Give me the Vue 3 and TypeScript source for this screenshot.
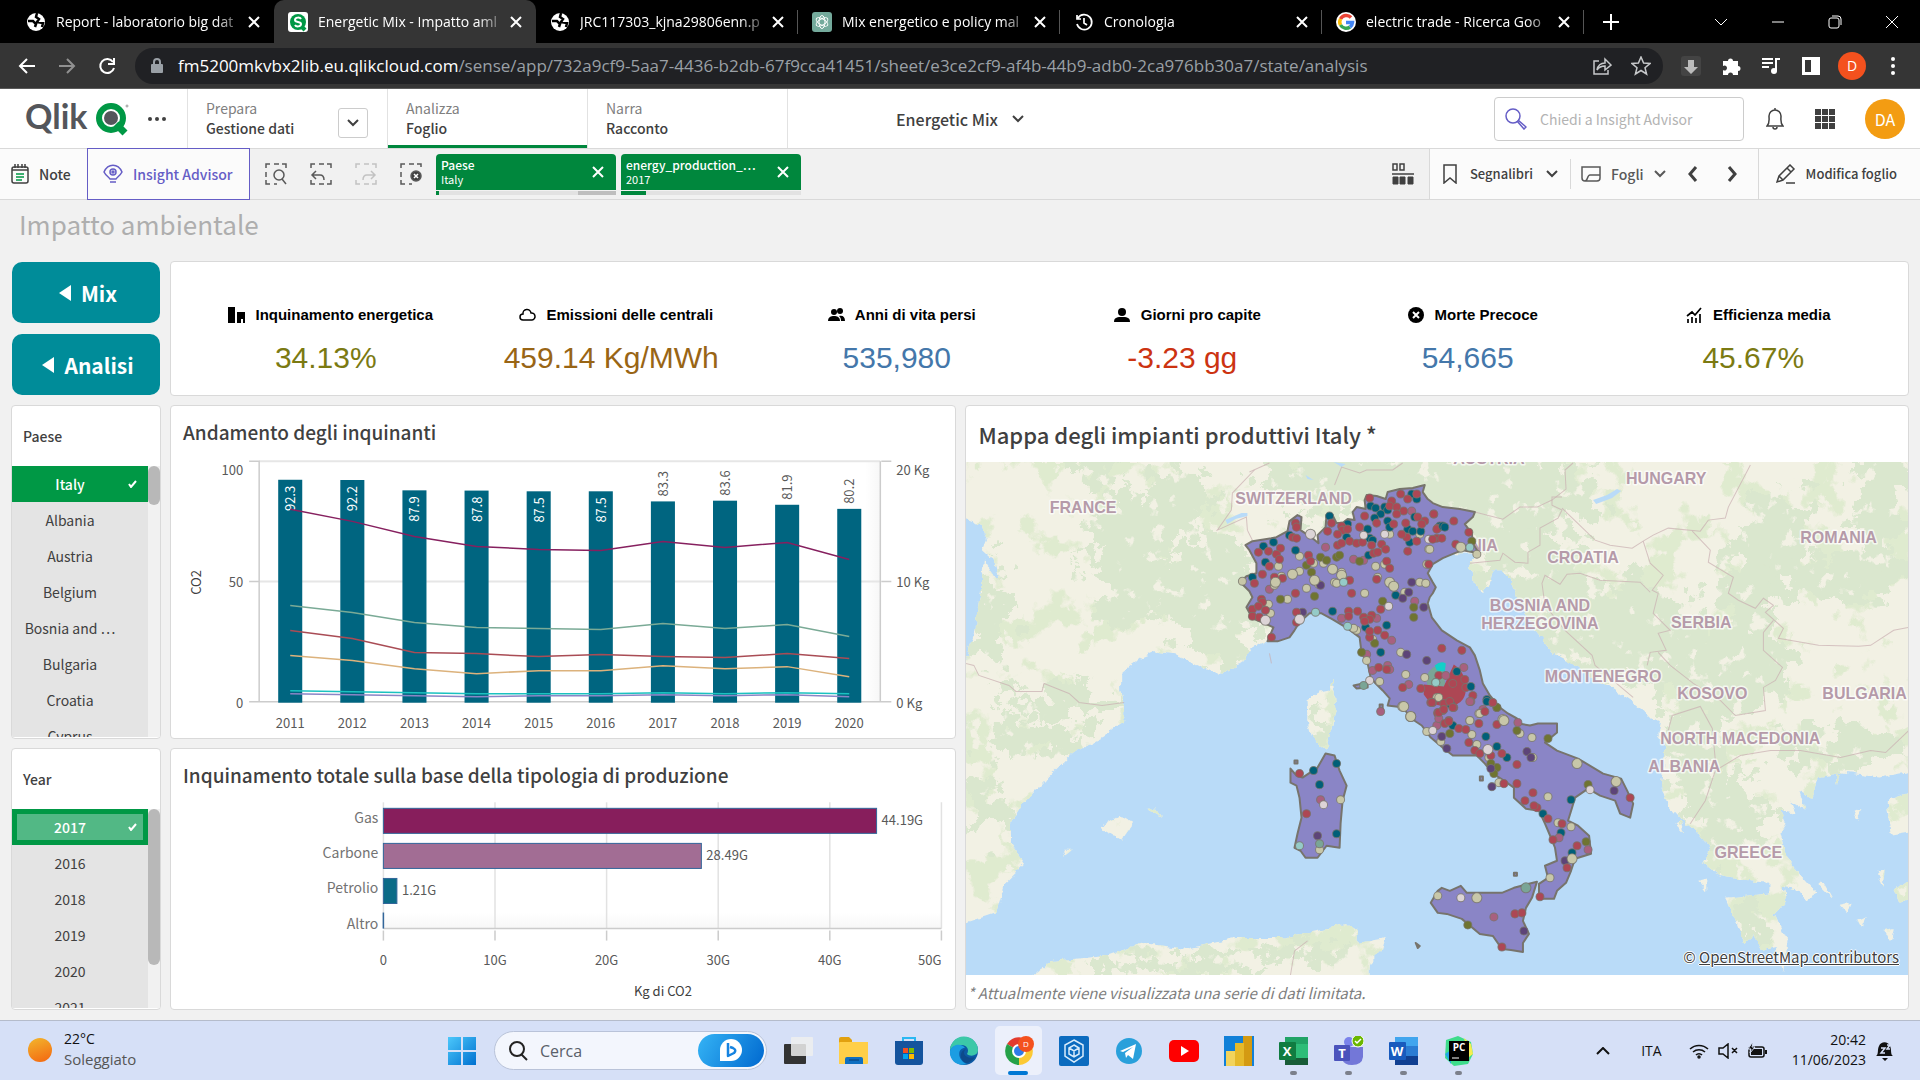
<script setup lang="ts">
import { ref } from 'vue'

interface Tab { title: string; icon: string }
interface Kpi { label: string; value: string; tone: string; icon: string }
interface Pins { tone: string; r: number; at: number[][] }

const tabs: Tab[] = [
  { title: 'Report - laboratorio big dat', icon: 'globe' },
  { title: 'Energetic Mix - Impatto aml', icon: 'sense' },
  { title: 'JRC117303_kjna29806enn.p', icon: 'globe' },
  { title: 'Mix energetico e policy mal', icon: 'gpt' },
  { title: 'Cronologia', icon: 'history' },
  { title: 'electric trade - Ricerca Goo', icon: 'google' },
]
const activeTab = ref(1)

const kpis: Kpi[] = [
  { label: 'Inquinamento energetica', value: '34.13%', tone: 'olive', icon: 'building' },
  { label: 'Emissioni delle centrali', value: '459.14 Kg/MWh', tone: 'brown', icon: 'cloud' },
  { label: 'Anni di vita persi', value: '535,980', tone: 'blue', icon: 'group' },
  { label: 'Giorni pro capite', value: '-3.23 gg', tone: 'red', icon: 'person' },
  { label: 'Morte Precoce', value: '54,665', tone: 'blue', icon: 'cross' },
  { label: 'Efficienza media', value: '45.67%', tone: 'olive', icon: 'trend' },
]

const countries = ['Italy', 'Albania', 'Austria', 'Belgium', 'Bosnia and …', 'Bulgaria', 'Croatia', 'Cyprus']
const years = ['2017', '2016', '2018', '2019', '2020', '2021']
const country = ref('Italy')
const year = ref('2017')

/* Combo chart: bars on the left axis (0-100), lines drawn over them */
const co2 = [92.3, 92.2, 87.9, 87.8, 87.5, 87.5, 83.3, 83.6, 81.9, 80.2]
const bars = co2.map((v, i) => ({ v, year: 2011 + i, x: 290 + 62 * i, y: 701 - 2.4 * v, inside: i < 6 }))
const lines = [
  { color: '#86205f', y: [509, 521, 536, 546, 549, 550, 541, 547, 542, 559] },
  { color: '#7aaa96', y: [605, 612, 622, 627, 628, 629, 623, 628, 624, 636] },
  { color: '#a94c55', y: [630, 638, 652, 653, 656, 654, 656, 657, 653, 658] },
  { color: '#dcb27c', y: [655, 660, 668, 673, 670, 670, 665, 668, 666, 676] },
  { color: '#8a85c6', y: [693, 694, 695, 696, 695, 695, 694, 695, 694, 696] },
  { color: '#1ac2c0', y: [690, 691, 692, 693, 693, 693, 692, 693, 692, 693] },
].map(l => ({ color: l.color, points: l.y.map((y, i) => `${290 + 62 * i},${y}`).join(' ') }))

const sources = [
  { name: 'Gas', v: 44.19, fill: '#871e5c' },
  { name: 'Carbone', v: 28.49, fill: '#a26d94' },
  { name: 'Petrolio', v: 1.21, fill: '#0b6b87' },
]
const gTicks = [0, 10, 20, 30, 40, 50]
const gx = (v: number) => 383 + v * 11.14

/* Map */
const coast = {
  continent: 'M960 456H1915V770L1878 777 1842 772 1817 777 1811 797 1799 790 1805 810 1790 800 1796 813 1780 810 1786 823 1780 833 1786 857 1799 873 1817 893 1805 900 1799 890 1783 887 1786 900 1774 913 1786 940 1783 970 1774 947 1762 950 1753 933 1744 943 1734 917 1725 897 1768 893 1768 882 1744 880 1719 875 1704 863 1710 847 1698 833 1685 823 1670 807 1661 790 1664 767 1664 743 1658 735 1661 720 1652 720 1643 710 1630 700 1610 687 1590 677 1573 663 1553 653 1537 633 1530 620 1517 597 1513 583 1502 570 1493 570 1490 583 1482 593 1473 580 1470 563 1479 553 1455 553 1400 540 1300 600 1268 641 1253 648 1243 662 1227 672 1213 672 1193 662 1177 655 1155 652 1142 657 1122 673 1122 690 1125 707 1125 720 1104 737 1073 753 1049 777 1024 803 1012 823 1012 843 1026 863 1006 883 997 912 960 924V660L967 660 975 633 982 590 985 560 995 575 1001 582 997 563 983 550 987 540 983 525 960 515Z',
  africa: 'M1027 980 1052 960 1107 955 1144 942 1187 948 1236 937 1284 937 1327 927 1346 923 1358 930 1358 942 1386 937 1382 950 1369 963 1369 980Z',
  corsica: 'M1333 680 1335 690 1337 710 1333 727 1326 749 1312 737 1308 720 1307 700 1320 692 1330 690Z',
  isles: 'M1101 827 1120 815 1134 823 1122 840ZM1147 808 1156 808 1163 817ZM1063 857 1073 849 1066 849ZM1698 880 1706 878 1706 890ZM1675 822 1680 820 1684 832ZM1853 812 1862 808 1856 818ZM1886 800 1915 790V830L1890 834ZM1876 872 1884 870 1882 886ZM1893 890 1915 872V896L1898 902ZM1840 905 1850 903 1846 912ZM1858 920 1866 916 1862 928ZM1885 930 1893 928 1890 940ZM1822 880 1832 898 1818 884ZM1836 773 1840 776 1836 783Z',
}
const woods = [
  [1400, 480, 140, 42], [1500, 500, 100, 50], [1215, 600, 50, 66], [985, 610, 24, 54], [1130, 560, 40, 70],
  [1090, 466, 26, 18], [1180, 500, 30, 38], [1060, 700, 64, 16], [1040, 740, 60, 18], [985, 800, 18, 30], [1610, 630, 96, 50],
  [1530, 575, 58, 34], [1730, 668, 62, 48], [1775, 540, 36, 56], [1850, 575, 76, 26], [1882, 500, 30, 60],
  [1690, 740, 26, 66], [1840, 745, 66, 20], [1730, 815, 36, 46], [1750, 590, 26, 50], [1180, 966, 90, 12], [1745, 920, 16, 22], [1300, 950, 40, 12], [1321, 718, 9, 26],
]
const borders = [
  '967,663 975,665 980,675 1010,685 1017,691 1043,691 1045,683 1070,693 1080,702 1103,705 1125,702',
  '1250,472 1270,463', '1255,470 1233,493 1232,510 1218,530 1247,517 1248,530 1253,540',
  '1335,485 1342,467 1360,473 1367,470 1393,470 1403,463',
  '1475,512 1503,519 1520,507 1537,507 1552,500 1566,489 1565,470 1573,463',
  '1470,563 1500,560 1503,553 1515,562 1528,563 1528,552 1540,545 1540,528 1558,518 1562,510 1552,505 1552,497 1562,497',
  '1562,508 1595,540 1610,545 1632,548 1643,541 1653,535 1668,528 1700,531 1708,520 1725,518 1728,507 1750,465',
  '1692,531 1710,550 1708,562 1733,577 1728,593 1738,600 1755,608 1763,598 1773,605 1765,612 1783,628 1778,638 1818,645 1858,646 1870,645 1893,630 1908,627',
  '1643,541 1650,563 1663,575 1652,590 1658,593 1653,613 1670,630 1658,633 1666,650 1650,652 1647,665',
  '1633,697 1595,665 1592,655 1565,630 1545,605 1542,583 1545,575 1560,584 1567,574 1580,573 1600,580 1640,582 1650,592',
  '1773,620 1763,632 1763,650 1782,667 1775,680 1763,687 1765,710 1735,715 1720,700 1693,683 1670,665 1658,652',
  '1690,823 1705,800 1715,770 1740,755 1770,750 1800,750 1840,757 1870,750 1885,752 1908,730',
  '1668,730 1672,715 1700,706 1712,728 1716,770', '1291,974 1295,950 1308,940', '1270,653 1272,663',
]
const places = [
  { t: 'FRANCE', x: 1084, y: 513 }, { t: 'SWITZERLAND', x: 1294, y: 504 }, { t: 'AUSTRIA', x: 1489, y: 464 },
  { t: 'HUNGARY', x: 1666, y: 484 }, { t: 'ROMANIA', x: 1838, y: 543 }, { t: 'SLOVENIA', x: 1457, y: 551 },
  { t: 'CROATIA', x: 1583, y: 563 }, { t: 'BOSNIA AND', x: 1540, y: 611 }, { t: 'HERZEGOVINA', x: 1540, y: 629 },
  { t: 'SERBIA', x: 1701, y: 628 }, { t: 'MONTENEGRO', x: 1603, y: 682 }, { t: 'KOSOVO', x: 1712, y: 699 },
  { t: 'BULGARIA', x: 1864, y: 699 }, { t: 'NORTH MACEDONIA', x: 1740, y: 743 }, { t: 'ALBANIA', x: 1684, y: 771 },
  { t: 'GREECE', x: 1748, y: 857 },
]
const italy = 'M1246 545 1253 541 1272 538 1277 537 1288 531 1290 521 1298 515 1302 517 1301 530 1313 538 1319 543 1318 535 1326 527 1327 515 1333 515 1337 523 1343 523 1348 519 1355 520 1353 512 1357 507 1366 509 1365 500 1367 495 1377 496 1386 499 1388 492 1400 489 1413 488 1425 485 1423 492 1428 499 1433 503 1443 507 1460 509 1475 512 1473 517 1465 524 1468 528 1472 533 1473 543 1479 553 1463 550 1455 553 1443 558 1433 564 1428 573 1433 582 1436 587 1433 593 1430 597 1428 603 1432 617 1442 630 1457 640 1470 647 1475 655 1480 670 1483 683 1490 695 1500 707 1508 713 1517 718 1519 723 1530 725 1538 723 1557 723 1557 732 1545 742 1557 750 1578 758 1603 773 1621 778 1627 790 1633 803 1630 817 1620 813 1615 800 1600 795 1588 788 1575 797 1572 807 1568 820 1578 825 1589 835 1591 853 1575 858 1571 870 1566 882 1557 890 1554 898 1539 898 1539 883 1548 877 1545 865 1557 860 1555 847 1551 837 1545 823 1539 810 1526 808 1514 797 1514 787 1504 780 1493 773 1485 763 1477 755 1453 755 1444 748 1431 737 1422 725 1410 717 1404 707 1388 705 1390 698 1383 690 1375 682 1371 677 1368 663 1362 653 1360 637 1348 628 1333 619 1322 613 1310 613 1300 622 1295 630 1290 637 1278 641 1268 641 1274 627 1265 623 1253 618 1247 607 1253 597 1250 591 1241 582 1247 576 1257 573 1257 563 1250 550Z'
  + 'M1326 753 1335 755 1340 770 1347 785 1343 800 1341 823 1340 847 1327 845 1318 857 1306 857 1301 850 1295 847 1298 833 1302 817 1300 797 1297 785 1291 782 1291 768 1297 775 1303 777 1318 767Z'
  + 'M1438 890 1442 887 1450 890 1461 885 1467 892 1502 892 1514 887 1529 883 1537 881 1532 897 1526 907 1523 920 1529 933 1523 942 1523 951 1511 949 1502 948 1493 935 1480 933 1462 918 1447 913 1438 912 1431 902Z'
  + 'M1354 685 1368 682 1368 687 1357 688ZM1380 704H1383V708H1380ZM1295 760H1298V763H1295ZM1480 776H1483V780H1480ZM1514 872H1517V875H1514ZM1416 942 1420 945 1418 947Z'

/* Plants, grouped by map sheet; every sheet carries its own origin and scale */
const red = '#ad4754', teal = '#005f78', cream = '#c8c7a9', olive = '#6f7431', violet = '#5d4478'
const rose = '#a8607f', pale = '#dcd4d6', aqua = '#95cbc8', sage = '#7aa596'
const sheets: { x: number; y: number; sx: number; sy: number; pins: Pins[] }[] = [
  { x: 960, y: 400, sx: 1 / 3, sy: 1 / 3, pins: [
    { tone: rose, r: 4, at: [[1097, 442], [1182, 476], [1213, 480], [930, 567], [1145, 654], [1250, 654], [1295, 720], [1355, 334], [1222, 762], [1240, 810], [1283, 795], [1290, 806], [1347, 852], [1264, 934], [1366, 604]] },
    { tone: cream, r: 4, at: [[1020, 468], [958, 498], [1020, 513], [1063, 490], [1040, 564], [1077, 552], [967, 528], [945, 556], [850, 544], [983, 596], [928, 611], [934, 640], [1092, 490], [1145, 515], [1125, 545], [1130, 548], [1249, 498], [1275, 492], [1290, 402], [1380, 403], [1407, 447], [1215, 580], [1335, 576], [1380, 547], [1398, 548], [1190, 690], [1182, 685], [1222, 781], [1324, 755], [1337, 823], [1260, 843], [1240, 718], [1395, 832], [1432, 890], [1255, 530], [1400, 492]] },
    { tone: olive, r: 4, at: [[1082, 472], [1100, 481], [1130, 470], [1140, 465], [1199, 484], [1042, 495], [1055, 517], [963, 597], [1065, 589], [1268, 603], [1362, 620], [1362, 651], [1207, 757], [1245, 728]] },
    { tone: teal, r: 4, at: [[1111, 349], [991, 405], [1009, 451], [941, 427], [912, 438], [917, 487], [880, 532], [1232, 317], [1247, 324], [1275, 320], [1284, 331], [1262, 343], [1245, 353], [1284, 364], [1290, 380], [1355, 281], [1370, 298], [1225, 388], [1165, 372], [1160, 410], [1230, 415], [1240, 420], [1227, 464], [1345, 386], [1360, 393], [1384, 394], [1350, 425], [1365, 352], [1309, 586], [1119, 634], [1218, 681], [1281, 675], [1263, 756], [1440, 378]] },
    { tone: violet, r: 4, at: [[1355, 545], [1330, 595], [1346, 577], [1391, 620], [1030, 636], [1083, 556], [1342, 763], [1402, 781]] },
    { tone: red, r: 4, at: [[1231, 295], [1215, 347], [1323, 283], [1372, 282], [1343, 298], [1297, 303], [1290, 318], [1312, 322], [1333, 332], [1310, 343], [1422, 343], [1375, 352], [1395, 363], [1385, 372], [1337, 370], [1303, 372], [1200, 380], [1250, 368], [1008, 370], [1010, 382], [998, 412], [1010, 415], [1117, 370], [1105, 392], [1145, 378], [1150, 390], [1165, 388], [1135, 402], [1135, 435], [1145, 428], [1170, 424], [1192, 428], [1210, 425], [1235, 435], [1265, 433], [1278, 447], [1344, 452], [1370, 424], [1340, 410], [1325, 403], [1433, 385], [1432, 415], [1242, 460], [1255, 456], [1282, 482], [1290, 503], [1047, 466], [1053, 482], [963, 445], [950, 462], [960, 478], [927, 452], [897, 456], [930, 497], [910, 523], [945, 530], [968, 533], [885, 550], [1007, 580], [1177, 580], [1170, 541], [1252, 537], [905, 597], [910, 606], [878, 628], [897, 618], [917, 630], [880, 647], [900, 652], [935, 712], [1010, 636], [1010, 666], [1168, 632], [1195, 634], [1168, 648], [1212, 650], [1235, 645], [1263, 628], [1230, 657], [1215, 662], [1255, 690], [1275, 705], [1230, 712], [1230, 693], [1408, 492], [1258, 800], [1280, 808], [1330, 860], [1383, 863], [1413, 905], [1435, 935]] },
    { tone: cream, r: 5, at: [[998, 522], [1120, 508], [1065, 541], [1290, 546], [1303, 557], [948, 546], [1147, 524], [1330, 917], [1353, 949]] },
    { tone: pale, r: 5, at: [[1052, 403], [1021, 656], [919, 660]] },
    { tone: pale, r: 4, at: [[1212, 405], [1275, 403], [1407, 416], [1286, 618], [1231, 841]] },
    { tone: aqua, r: 4, at: [[1152, 547], [1069, 637], [1165, 679], [1429, 846]] },
    { tone: sage, r: 4, at: [[1211, 856]] },
  ] },
  { x: 1430, y: 400, sx: 1 / 3, sy: 1 / 3, pins: [
    { tone: red, r: 4, at: [[12, 343], [72, 364], [22, 386], [36, 415], [10, 418], [118, 395], [78, 433], [37, 744], [97, 751], [27, 824], [105, 838], [107, 860], [128, 886], [187, 905], [72, 921], [40, 930], [8, 905], [25, 938], [68, 848], [162, 934], [58, 960]] },
    { tone: rose, r: 4, at: [[102, 800], [48, 824], [122, 903], [160, 926]] },
    { tone: teal, r: 4, at: [[40, 377], [45, 382], [82, 812], [122, 858], [170, 897], [64, 913]] },
    { tone: olive, r: 4, at: [[125, 423], [202, 920]] },
    { tone: cream, r: 4, at: [[142, 462], [0, 448], [27, 890], [148, 939], [120, 960]] },
    { tone: cream, r: 5, at: [[94, 440], [220, 957]] },
    { tone: aqua, r: 4, at: [[119, 441], [19, 847]] },
  ] },
  { x: 960, y: 700, sx: 1 / 1.6333, sy: 1 / 3, pins: [
    { tone: cream, r: 4, at: [[763, 92], [785, 122], [833, 60], [849, 38], [836, 103], [845, 132], [864, 172], [914, 100], [935, 111], [880, 245], [960, 289], [936, 172], [998, 379], [976, 366], [964, 530], [780, 585], [622, 298], [588, 448]] },
    { tone: olive, r: 4, at: [[801, 100], [877, 20], [909, 90], [961, 115], [877, 200], [872, 218], [868, 190], [1025, 252], [1022, 424], [830, 671]] },
    { tone: teal, r: 4, at: [[806, 75], [859, 109], [877, 139], [894, 170], [861, 2], [998, 296], [953, 338], [982, 395], [999, 456], [616, 188], [579, 209], [588, 252], [616, 399]] },
    { tone: violet, r: 4, at: [[787, 108], [795, 144], [868, 205], [926, 154], [932, 170], [869, 257], [1068, 270], [988, 480], [584, 404], [921, 690]] },
    { tone: rose, r: 4, at: [[911, 66], [779, 75], [783, 55], [833, 3], [979, 410], [872, 647], [590, 297], [1026, 448]] },
    { tone: red, r: 4, at: [[771, 6], [790, 8], [800, 4], [783, 35], [790, 28], [806, 22], [858, 32], [870, 5], [792, 70], [799, 62], [815, 84], [827, 87], [847, 68], [877, 72], [831, 126], [841, 150], [850, 160], [868, 166], [886, 158], [909, 192], [888, 250], [909, 249], [936, 275], [923, 299], [942, 320], [937, 316], [960, 355], [983, 370], [968, 418], [1007, 436], [992, 502], [948, 588], [906, 640], [918, 635], [885, 738], [1095, 290], [555, 220], [566, 340]] },
    { tone: cream, r: 5, at: [[725, 17], [737, 49], [888, 59], [1008, 188], [1072, 244], [1000, 475], [844, 590]] },
    { tone: pale, r: 4, at: [[772, 91], [594, 313], [819, 591], [1029, 267]] },
    { tone: pale, r: 5, at: [[862, 146]] },
    { tone: aqua, r: 4, at: [[555, 434]] },
    { tone: sage, r: 5, at: [[925, 560]] },
    { tone: sage, r: 4, at: [[588, 430]] },
  ] },
]
const pins = sheets.flatMap(s => s.pins.flatMap(p => p.at.map(([x, y]) => ({
  tone: p.tone, r: p.r, x: Math.round(s.x + x * s.sx), y: Math.round(s.y + y * s.sy),
}))))

const apps = ['taskview', 'folder', 'store', 'edge', 'chrome', 'box', 'telegram', 'youtube', 'powerbi', 'excel', 'teams', 'word', 'pycharm']
const running = ['excel', 'teams', 'word', 'pycharm']
</script>

<template>
  <div class="screen">
    <header class="tabbar">
      <div v-for="(t, i) in tabs" :key="i" class="tab" :class="{ active: i === activeTab, ruled: i > 1 }">
        <svg class="fav" viewBox="0 0 20 20" aria-hidden="true">
          <g v-if="t.icon === 'globe'"><circle cx="10" cy="10" r="9" fill="#fff" /><path d="M2 9h5l3 3-1 3M11 1l-1 4 3 2-2 3 6 1-1 4" fill="none" stroke="#000" stroke-width="2.500" /></g>
          <g v-else-if="t.icon === 'sense'"><rect width="20" height="20" rx="3" fill="#fff" /><circle cx="10" cy="10" r="8" fill="#009845" /><path d="M13 14l4 4" stroke="#009845" stroke-width="4" /><path d="M13 7c-1-2-6-2-6 1s6 1 6 4-5 3-6 1" fill="none" stroke="#fff" stroke-width="2" /></g>
          <g v-else-if="t.icon === 'gpt'"><rect width="20" height="20" rx="3" fill="#74aa9c" /><g fill="none" stroke="#fff"><ellipse cx="10" cy="10" rx="3" ry="6.500" /><ellipse cx="10" cy="10" rx="3" ry="6.500" transform="rotate(60 10 10)" /><ellipse cx="10" cy="10" rx="3" ry="6.500" transform="rotate(120 10 10)" /></g></g>
          <g v-else-if="t.icon === 'history'" fill="none" stroke="#fff" stroke-width="1.700"><path d="M4 6a7.500 7.500 0 1 1-1 6M3 3v4h4M10 6v5l3 2" /></g>
          <g v-else fill="none" stroke-width="3.500"><circle cx="10" cy="10" r="10" fill="#fff" stroke="none" /><path d="M15 5.500A6.500 6.500 0 0 0 4.500 7" stroke="#ea4335" /><path d="M4.500 7a6.500 6.500 0 0 0 0 6" stroke="#fbbc05" /><path d="M4.500 13A6.500 6.500 0 0 0 14 15" stroke="#34a853" /><path d="M14 15a6 6 0 0 0 2.500-4.500H10" stroke="#4285f4" /></g>
        </svg>
        <button class="tab-title" type="button" @click="activeTab = i">{{ t.title }}</button>
        <button class="tab-close" type="button" aria-label="Chiudi scheda"><svg width="12" height="12" viewBox="0 0 12 12"><path d="M1 1l10 10M11 1L1 11" stroke="#fff" stroke-width="2" /></svg></button>
      </div>
      <button class="newtab" type="button" aria-label="Nuova scheda"><svg width="16" height="16" viewBox="0 0 16 16"><path d="M8 0v16M0 8h16" stroke="#fff" stroke-width="2" /></svg></button>
      <div class="winctl">
        <button type="button" aria-label="Cerca schede"><svg width="14" height="14" viewBox="0 0 14 14"><path d="M1 4l6 6 6-6" /></svg></button>
        <button type="button" aria-label="Riduci"><svg width="14" height="14" viewBox="0 0 14 14"><path d="M1 7h12" /></svg></button>
        <button type="button" aria-label="Ripristina"><svg width="14" height="14" viewBox="0 0 14 14"><rect x="1" y="3" width="10" height="10" rx="2" /><path d="M4 1h6q3 0 3 3v6" /></svg></button>
        <button type="button" aria-label="Chiudi"><svg width="14" height="14" viewBox="0 0 14 14"><path d="M1 1l12 12M13 1L1 13" /></svg></button>
      </div>
    </header>

    <div class="addressbar">
      <button class="nav" type="button" aria-label="Indietro"><svg width="18" height="18" viewBox="0 0 18 18"><path d="M17 9H2M9 2L2 9l7 7" /></svg></button>
      <button class="nav dim" type="button" aria-label="Avanti"><svg width="18" height="18" viewBox="0 0 18 18"><path d="M1 9h15M9 2l7 7-7 7" /></svg></button>
      <button class="nav" type="button" aria-label="Ricarica"><svg width="18" height="18" viewBox="0 0 18 18"><path d="M15 5A7 7 0 1 0 16 11M16 1v6h-6" /></svg></button>
      <div class="omnibox">
        <svg width="12" height="16" viewBox="0 0 12 16"><rect y="6" width="12" height="9" rx="1" fill="#9aa0a6" /><path d="M3 7V4a3 3 0 0 1 6 0v3" fill="none" stroke="#9aa0a6" stroke-width="2" /></svg>
        <p class="url"><b>fm5200mkvbx2lib.eu.qlikcloud.com</b>/sense/app/732a9cf9-5aa7-4436-b2db-67f9cca41451/sheet/e3ce2cf9-af4b-44b9-adb0-2ca976bb30a7/state/analysis</p>
        <svg class="ic" width="20" height="20" viewBox="0 0 20 20"><path d="M7 5H2v13h14v-4M5 14c1-5 4-7 8-7V3l6 6-6 5v-4c-4 0-6 1-8 4z" /></svg>
        <svg class="ic" width="20" height="20" viewBox="0 0 20 20"><path d="M10 1l2.600 6 6.400.5-5 4.200 1.600 6.300-5.600-3.500L4.400 18 6 11.700 1 7.500 7.400 7z" /></svg>
      </div>
      <div class="ext">
        <svg width="20" height="20" viewBox="0 0 20 20"><rect width="20" height="20" rx="3" fill="#444" /><path d="M7 4h6v7h4l-7 7-7-7h4z" fill="#bbb" /></svg>
        <svg width="20" height="20" viewBox="0 0 20 20"><path d="M2 5h5a2.500 2.500 0 1 1 5 0h5v5a2.500 2.500 0 1 1 0 5v4h-5a2.500 2.500 0 1 0-5 0H2v-5a2.500 2.500 0 1 0 0-4z" fill="#fff" /></svg>
        <svg width="20" height="20" viewBox="0 0 20 20"><path d="M1 3h11M1 7h11M1 11h7M15 15V3h4" fill="none" stroke="#fff" stroke-width="2" /><circle cx="13" cy="15" r="3" fill="#fff" /></svg>
        <svg width="20" height="20" viewBox="0 0 20 20"><path d="M1 1h18v18H1zM4 4v12h6V4z" fill="#fff" fill-rule="evenodd" /></svg>
        <span class="me">D</span>
        <svg width="20" height="20" viewBox="0 0 20 20" fill="#fff"><circle cx="10" cy="3" r="2" /><circle cx="10" cy="10" r="2" /><circle cx="10" cy="17" r="2" /></svg>
      </div>
    </div>

    <div class="hub">
      <div class="brand">
        <svg class="logo" width="104" height="36" viewBox="0 0 104 36" role="img" aria-label="Qlik">
          <text x="0" y="28" class="logo-word">Qlik</text>
          <circle cx="86" cy="17" r="12" fill="#fff" stroke="#009845" stroke-width="6" />
          <path d="M91 23l9 9" stroke="#009845" stroke-width="7" /><circle cx="86" cy="17" r="7" fill="#54565b" /><circle cx="102" cy="5" r="1" fill="none" stroke="#999" />
        </svg>
        <button class="plain" type="button" aria-label="Altro"><svg width="20" height="6" viewBox="0 0 20 6" fill="#404040"><circle cx="3" cy="3" r="2" /><circle cx="10" cy="3" r="2" /><circle cx="17" cy="3" r="2" /></svg></button>
      </div>
      <nav class="modes">
        <a href="#prepara" class="mode"><span><small>Prepara</small>Gestione dati</span><i class="drop"><svg width="12" height="8" viewBox="0 0 12 8"><path d="M1 1l5 5 5-5" fill="none" stroke="#404040" stroke-width="2" /></svg></i></a>
        <a href="#analizza" class="mode on"><span><small>Analizza</small>Foglio</span></a>
        <a href="#narra" class="mode"><span><small>Narra</small>Racconto</span></a>
      </nav>
      <button class="appname" type="button">Energetic Mix <svg width="12" height="8" viewBox="0 0 12 8"><path d="M1 1l5 5 5-5" fill="none" stroke="#404040" stroke-width="2" /></svg></button>
      <div class="tools">
        <label class="ask">
          <svg width="22" height="22" viewBox="0 0 22 22" fill="none" stroke="#655dc6" stroke-width="1.500"><circle cx="8" cy="8" r="7" /><path d="M12 13l7 8 2-2-8-7" /></svg>
          <input type="text" placeholder="Chiedi a Insight Advisor" aria-label="Chiedi a Insight Advisor" />
        </label>
        <svg class="bell" width="18" height="22" viewBox="0 0 18 22" fill="none" stroke="#404040" stroke-width="1.500"><path d="M1 18c3-3 2-6 2-10a6 6 0 0 1 12 0c0 4-1 7 2 10zM7 19a2 2 0 0 0 4 0M9 0v2" /></svg>
        <svg class="launcher" width="20" height="20" viewBox="0 0 20 20" fill="#404040"><template v-for="r in 3" :key="r"><rect v-for="c in 3" :key="c" :x="c * 7 - 7" :y="r * 7 - 7" width="6" height="6" /></template></svg>
        <span class="avatar">DA</span>
      </div>
    </div>

    <div class="toolbar">
      <button class="tb note" type="button"><svg width="18" height="20" viewBox="0 0 18 20" fill="none" stroke="#404040" stroke-width="1.500"><rect x="1" y="3" width="16" height="16" rx="2" /><path d="M1 6h16M4 0v4M7 0v4M11 0v4M14 0v4" /><path d="M5 10h8M5 13h8M5 16h6" stroke="#009845" /></svg>Note</button>
      <button class="tb advisor" type="button"><svg width="20" height="20" viewBox="0 0 20 20" fill="none" stroke="#655dc6" stroke-width="1.500"><path d="M1 8c4-9 14-9 18 0-2 4-5 5-6 7H7C6 13 3 12 1 8zM7 18h6" /><circle cx="10" cy="8" r="3" /><circle cx="10" cy="8" r="1" /></svg>Insight Advisor</button>
      <div class="selicons">
        <button class="plain" type="button" aria-label="Selezione intelligente"><svg width="22" height="22" viewBox="0 0 22 22"><path d="M5 1H1v4M9 1h5M17 1h4v4M1 9v5M1 17v4h4M9 21h3" /><circle cx="14" cy="12" r="5" /><path d="M17 16l4 5" /></svg></button>
        <button class="plain" type="button" aria-label="Passo indietro"><svg width="22" height="22" viewBox="0 0 22 22"><path d="M5 1H1v4M9 1h5M17 1h4v4M1 17v4h4M9 21h5M17 21h4v-4" /><path d="M6 8L2 12l4 4M2 12h8q4 0 4 5" /></svg></button>
        <button class="plain off" type="button" aria-label="Passo avanti" disabled><svg width="22" height="22" viewBox="0 0 22 22"><path d="M5 1H1v4M9 1h5M17 1h4v4M1 17v4h4M9 21h5M17 21h4v-4" /><path d="M16 8l4 4-4 4M20 12h-8q-4 0-4 5" /></svg></button>
        <button class="plain" type="button" aria-label="Cancella selezioni"><svg width="22" height="22" viewBox="0 0 22 22"><path d="M5 1H1v4M9 1h5M17 1h4v3M1 9v5M1 17v4h4M9 21h3" /><circle cx="16" cy="13" r="5" fill="#404040" /><path d="M14 11l4 4M18 11l-4 4" stroke="#fff" /></svg></button>
      </div>
      <div class="chips">
        <div class="chip"><div class="chip-body"><span><b>Paese</b>Italy</span><button type="button" aria-label="Cancella Paese"><svg width="12" height="12" viewBox="0 0 12 12"><path d="M1 1l10 10M11 1L1 11" stroke="#fff" stroke-width="2" /></svg></button></div><div class="strip paese" /></div>
        <div class="chip"><div class="chip-body"><span><b>energy_production_…</b>2017</span><button type="button" aria-label="Cancella anno"><svg width="12" height="12" viewBox="0 0 12 12"><path d="M1 1l10 10M11 1L1 11" stroke="#fff" stroke-width="2" /></svg></button></div><div class="strip anno" /></div>
      </div>
      <button class="plain seltool" type="button" aria-label="Strumento selezioni"><svg width="22" height="22" viewBox="0 0 22 22" fill="none" stroke="#404040"><path d="M1 1h4v6H1zM8 1h4v6H8zM0 11h22" stroke-width="1.500" /><path d="M1 14h5v7H1zM8 14h5v7H8zM16 14h5v7h-5z" fill="#404040" /></svg></button>
      <div class="sheettools">
        <button class="tb" type="button"><svg width="14" height="20" viewBox="0 0 14 20" fill="none" stroke="#404040" stroke-width="1.500"><path d="M1 1h12v18l-6-5-6 5z" /></svg>Segnalibri<svg width="12" height="8" viewBox="0 0 12 8"><path d="M1 1l5 5 5-5" fill="none" stroke="#404040" stroke-width="2" /></svg></button>
        <i class="sep" />
        <button class="tb fogli" type="button"><svg width="20" height="16" viewBox="0 0 20 16" fill="none" stroke="#595959" stroke-width="1.500"><path d="M4 15a3 3 0 0 1-3-3V1h18v8M4 15c3 0 2-6 5-6h10v3a3 3 0 0 1-3 3z" /></svg>Fogli<svg width="12" height="8" viewBox="0 0 12 8"><path d="M1 1l5 5 5-5" fill="none" stroke="#595959" stroke-width="2" /></svg></button>
        <button class="plain step" type="button" aria-label="Foglio precedente"><svg width="10" height="16" viewBox="0 0 10 16"><path d="M8 1L2 8l6 7" fill="none" stroke="#404040" stroke-width="3" /></svg></button>
        <button class="plain step" type="button" aria-label="Foglio successivo"><svg width="10" height="16" viewBox="0 0 10 16"><path d="M2 1l6 7-6 7" fill="none" stroke="#404040" stroke-width="3" /></svg></button>
      </div>
      <button class="tb edit" type="button"><svg width="20" height="20" viewBox="0 0 20 20" fill="none" stroke="#404040" stroke-width="1.500"><path d="M1 18l2-6L14 1l4 4L7 16zM11 4l4 4M3 12l4 4M10 19h9" /></svg>Modifica foglio</button>
    </div>

    <main class="sheet">
      <h1>Impatto ambientale</h1>
      <div class="grid">
        <div class="navbtns">
          <button type="button"><svg width="12" height="16" viewBox="0 0 12 16"><path d="M12 0v16L0 8z" fill="#fff" /></svg>Mix</button>
          <button type="button"><svg width="12" height="16" viewBox="0 0 12 16"><path d="M12 0v16L0 8z" fill="#fff" /></svg>Analisi</button>
        </div>

        <section class="card kpis">
          <div v-for="k in kpis" :key="k.label" class="kpi">
            <h3>
              <svg width="17" height="16" viewBox="0 0 17 16" aria-hidden="true">
                <path v-if="k.icon === 'building'" d="M0 0h7v16H0zM9 5h8v11h-2v-4h-2v4H9z" />
                <path v-else-if="k.icon === 'cloud'" d="M4 13a3 3 0 0 1 0-6 4 4 0 0 1 8-1 3.500 3.500 0 0 1 1 7z" fill="none" stroke="#000" stroke-width="1.500" />
                <g v-else-if="k.icon === 'group'"><circle cx="6" cy="5" r="3" /><path d="M0 14c0-4 3-5 6-5s6 1 6 5z" /><circle cx="12" cy="4" r="3" /><path d="M13 14c0-3-1-4-2-5 4-1 6 1 6 5z" /></g>
                <g v-else-if="k.icon === 'person'"><circle cx="8" cy="5" r="4" /><path d="M0 15c0-5 4-5 8-5s8 0 8 5z" /></g>
                <g v-else-if="k.icon === 'cross'"><circle cx="8" cy="8" r="8" /><path d="M5 5l6 6M11 5l-6 6" stroke="#fff" stroke-width="2" /></g>
                <path v-else d="M2 16v-4M6 16V10M10 16v-5M14 16V7M1 9l5-4 3 3 6-7" fill="none" stroke="#000" stroke-width="1.700" />
              </svg>{{ k.label }}
            </h3>
            <p :class="k.tone">{{ k.value }}</p>
          </div>
        </section>

        <section class="card filter">
          <h2>Paese</h2>
          <div class="listwrap">
            <ul>
              <li v-for="c in countries" :key="c"><button type="button" :class="{ picked: c === country }" @click="country = c">{{ c }}<svg v-if="c === country" width="9" height="8" viewBox="0 0 9 8"><path d="M1 4l2 3 5-6" fill="none" stroke="#fff" stroke-width="2" /></svg></button></li>
            </ul>
            <div class="track"><i class="thumb short" /></div>
          </div>
        </section>

        <section class="card combo">
          <h2>Andamento degli inquinanti</h2>
          <svg class="plot" viewBox="171 454 783 283" role="img" aria-label="Andamento degli inquinanti">
            <defs><linearGradient id="fadeR"><stop offset="0" stop-color="#fff" /><stop offset="1" stop-color="#f7f7f7" /></linearGradient></defs>
            <rect x="864" y="461" width="15" height="240" fill="url(#fadeR)" />
            <path d="M259 461H879M259 581H879" stroke="#e6e6e6" stroke-width="2" />
            <path d="M249 461H259V701H249M249 581H259M890 461H880M890 581H880M890 701H259M879 461V701" fill="none" stroke="#ccc" stroke-width="1.500" />
            <g v-for="b in bars" :key="b.year">
              <rect :x="b.x - 12" :y="b.y" width="24" :height="702 - b.y" fill="#006580" />
            </g>
            <g v-for="b in bars" :key="b.year" class="axis mid">
              <text :x="b.x" y="727">{{ b.year }}</text>
              <text :class="b.inside ? 'end light' : 'start'" :transform="`translate(${b.x + 5} ${b.inside ? b.y + 6 : b.y - 5}) rotate(-90)`">{{ b.v.toFixed(1) }}</text>
            </g>
            <polyline v-for="l in lines" :key="l.color" :points="l.points" fill="none" :stroke="l.color" stroke-width="1.500" />
            <g class="axis end"><text x="243" y="475">100</text><text x="243" y="587">50</text><text x="243" y="707">0</text></g>
            <g class="axis"><text x="895" y="475">20 Kg</text><text x="895" y="587">10 Kg</text><text x="895" y="707">0 Kg</text></g>
            <text class="axis mid dark" transform="translate(201 582) rotate(-90)">CO2</text>
          </svg>
        </section>

        <section class="card map">
          <h2>Mappa degli impianti produttivi Italy *</h2>
          <div class="canvas">
            <svg viewBox="966 462 942 512" preserveAspectRatio="xMidYMid slice" role="img" aria-label="Mappa degli impianti">
              <defs>
                <filter id="rough" x="-5%" y="-5%" width="110%" height="110%"><feTurbulence type="fractalNoise" baseFrequency="0.12" numOctaves="3" seed="4" /><feDisplacementMap in="SourceGraphic" scale="7" xChannelSelector="R" yChannelSelector="G" /></filter>
                <filter id="ragged" x="-5%" y="-5%" width="110%" height="110%"><feTurbulence type="fractalNoise" baseFrequency="0.045" numOctaves="4" seed="8" /><feDisplacementMap in="SourceGraphic" scale="80" xChannelSelector="R" yChannelSelector="G" /></filter>
                <filter id="meadow" x="0" y="0" width="100%" height="100%" color-interpolation-filters="sRGB"><feTurbulence type="fractalNoise" baseFrequency="0.025" numOctaves="4" seed="21" /><feColorMatrix values="0 0 0 0 .875  0 0 0 0 .92  0 0 0 0 .81  16 0 0 0 -8.8" /></filter>
                <filter id="fields" x="0" y="0" width="100%" height="100%" color-interpolation-filters="sRGB"><feTurbulence type="fractalNoise" baseFrequency="0.06" numOctaves="3" seed="3" /><feColorMatrix values="0 0 0 0 .948  0 0 0 0 .946  0 0 0 0 .895  14 0 0 0 -9" /></filter>
                <clipPath id="land"><path v-for="(d, n) in coast" :key="n" :d="d" /></clipPath>
              </defs>
              <rect x="966" y="462" width="942" height="512" fill="#b9dbf8" />
              <g filter="url(#rough)">
                <path v-for="(d, n) in coast" :key="n" :d="d" fill="#f2f1e4" />
                <g clip-path="url(#land)">
                  <rect x="966" y="462" width="942" height="512" filter="url(#meadow)" />
                  <g filter="url(#ragged)"><ellipse v-for="(w, i) in woods" :key="i" :cx="w[0]" :cy="w[1]" :rx="w[2]" :ry="w[3]" fill="#dae7ce" /></g>
                  <rect x="966" y="462" width="942" height="512" filter="url(#fields)" />
                </g>
              </g>
              <path d="M1226 520l16-7h6v3l-12 3-8 5zM1593 500l14-5 10-6 4 2-9 7-16 6zM1334 462l8 5 4-3zM1306 475l8 5-6-1z" fill="#b9dbf8" />
              <polyline v-for="(b, i) in borders" :key="i" :points="b" fill="none" stroke="#c9aeb0" stroke-opacity=".7" />
              <text v-for="p in places" :key="p.t" class="place" :x="p.x" :y="p.y">{{ p.t }}</text>
              <path :d="italy" fill="#8a85c6" stroke="#77746c" stroke-width="2" stroke-linejoin="round" />
              <path d="M1430 690a20 20 0 0 1-2-17q4-8 14-8l4 20z" fill="#7aa596" />
              <path d="M1435 665q6-5 11-2l-1 8-8-1z" fill="#12cfc8" />
              <path d="M1424 684l20 2 10-22q12 8 12 24 0 17-20 18-16-1-22-12z" fill="#ad4754" />
              <circle v-for="(p, i) in pins" :key="i" :cx="p.x" :cy="p.y" :r="p.r" :fill="p.tone" stroke="#77746c" stroke-opacity=".8" />
            </svg>
            <p class="credit">© <a href="#osm">OpenStreetMap contributors</a></p>
          </div>
          <p class="foot">* Attualmente viene visualizzata una serie di dati limitata.</p>
        </section>

        <section class="card filter">
          <h2>Year</h2>
          <div class="listwrap">
            <ul>
              <li v-for="y in years" :key="y"><button type="button" :class="{ picked: y === year, framed: y === year }" @click="year = y">{{ y }}<svg v-if="y === year" width="9" height="8" viewBox="0 0 9 8"><path d="M1 4l2 3 5-6" fill="none" stroke="#fff" stroke-width="2" /></svg></button></li>
            </ul>
            <div class="track"><i class="thumb long" /></div>
          </div>
        </section>

        <section class="card combo">
          <h2>Inquinamento totale sulla base della tipologia di produzione</h2>
          <svg class="plot" viewBox="171 797 783 211" role="img" aria-label="Inquinamento totale">
            <defs><linearGradient id="fadeB" x2="0" y2="1"><stop offset="0" stop-color="#fff" /><stop offset="1" stop-color="#f7f7f7" /></linearGradient></defs>
            <rect x="383" y="912" width="557" height="16" fill="url(#fadeB)" />
            <g v-for="g in gTicks" :key="g">
              <path :d="`M${gx(g)} 802V928`" stroke="#e2e2e2" stroke-width="1.500" /><path :d="`M${gx(g)} 930V940`" stroke="#ccc" stroke-width="1.500" />
              <text :class="['axis', g === 50 ? 'end' : 'mid']" :x="gx(g)" y="964">{{ g ? g + 'G' : '0' }}</text>
            </g>
            <path d="M383 928H940" stroke="#ccc" stroke-width="1.500" />
            <g v-for="(s, i) in sources" :key="s.name">
              <rect x="383" :y="808 + 35 * i" :width="s.v * 11.14" height="25" :fill="s.fill" stroke="#32669a" />
              <text class="axis" :x="gx(s.v) + 5" :y="825 + 35 * i">{{ s.v }}G</text>
              <text class="axis end cat" x="378" :y="823 + 35 * i">{{ s.name }}</text>
            </g>
            <path d="M383 912V928" stroke="#32669a" stroke-width="1.500" />
            <text class="axis end cat" x="378" y="928">Altro</text>
            <text class="axis mid dark" x="662" y="995">Kg di CO2</text>
          </svg>
        </section>
      </div>
    </main>

    <footer class="taskbar">
      <div class="weather"><i class="sun" /><p>22°C<br /><span>Soleggiato</span></p></div>
      <div class="dock">
        <button class="slot" type="button" aria-label="Start"><svg width="30" height="30" viewBox="0 0 30 30"><defs><linearGradient id="win" x2="1" y2="1"><stop offset="0" stop-color="#4cc8fb" /><stop offset="1" stop-color="#0071d0" /></linearGradient></defs><path d="M1 1h13v13H1zM16 1h13v13H16zM1 16h13v13H1zM16 16h13v13H16z" fill="url(#win)" /></svg></button>
        <label class="find">
          <svg width="20" height="20" viewBox="0 0 20 20" fill="none" stroke="#222" stroke-width="2"><circle cx="9" cy="8" r="7" /><path d="M13 13l6 6" /></svg>
          <input type="text" placeholder="Cerca" aria-label="Cerca" />
          <i class="bing"><svg width="26" height="26" viewBox="0 0 26 26"><path d="M13 1a11 11 0 0 1 0 22H2V12A11 11 0 0 1 13 1z" fill="#fff" /><path d="M10 5v13l6-3q3-3-1-5l-3-1" fill="none" stroke="#1683e0" stroke-width="2.500" stroke-linejoin="round" /></svg></i>
        </label>
        <button v-for="a in apps" :key="a" class="slot" :class="{ front: a === 'chrome' }" type="button" :aria-label="a">
          <svg width="30" height="30" viewBox="0 0 30 30">
            <g v-if="a === 'taskview'"><rect x="0" y="8" width="22" height="20" rx="1" fill="#333" /><rect x="7" y="1" width="22" height="19" rx="1" fill="#eee" fill-opacity=".85" /></g>
            <g v-else-if="a === 'folder'"><path d="M0 3q0-2 2-2h8l3 3v6H0z" fill="#e2a10f" /><path d="M0 7q0-1 1-1h28v21q0 1-1 1H0z" fill="#ffcf48" /><path d="M6 28v-5q0-2 2-2h14q2 0 2 2v5z" fill="#0f6fc0" /><path d="M10 24h10" stroke="#083c70" /></g>
            <g v-else-if="a === 'store'"><path d="M9 6V2h12v4" fill="none" stroke="#2bb8f2" stroke-width="2" /><path d="M1 5h28v21q0 3-3 3H4q-3 0-3-3z" fill="#15549d" /><path d="M9 12h5v5H9z" fill="#f25022" /><path d="M15 12h5v5h-5z" fill="#7fba00" /><path d="M9 18h5v5H9z" fill="#00a4ef" /><path d="M15 18h5v5h-5z" fill="#ffb900" /></g>
            <g v-else-if="a === 'edge'"><circle cx="15" cy="15" r="14" fill="#0c59a4" /><path d="M1 15A14 14 0 0 1 29 14c0 6-8 7-11 4 3-5-1-9-5-9-6 0-11 2-12 6z" fill="#3cc8a8" /><path d="M1 15c1-6 11-9 15-3-8 0-8 12 2 16C8 31 0 24 1 15z" fill="#1b9de2" /><path d="M17 13c-5 4 0 11 9 8-3 4-6 6-9 6-7-3-7-12 0-14z" fill="#0d4a8b" /></g>
            <g v-else-if="a === 'chrome'"><path d="M15 15L3 8a14 14 0 0 1 24 0z" fill="#e33b2e" /><path d="M15 15V29A14 14 0 0 1 3 8z" fill="#25a148" /><path d="M15 15L27 8a14 14 0 0 1-12 21z" fill="#fcc934" /><circle cx="15" cy="15" r="7" fill="#fff" /><circle cx="15" cy="15" r="5" fill="#2f7be8" /><circle cx="22" cy="8" r="8" fill="#f4511e" /><text x="22" y="11" class="tiny">D</text></g>
            <g v-else-if="a === 'box'"><rect width="30" height="30" rx="2" fill="#0b6bbf" /><path d="M15 4l9 5v11l-9 6-9-6V9zM15 9l5 3v6l-5 3-5-3v-6zM10 12l5 3 5-3M15 15v6" fill="none" stroke="#d9ecfb" stroke-width="1.500" /></g>
            <g v-else-if="a === 'telegram'"><circle cx="15" cy="15" r="13" fill="#29a0db" /><path d="M6 15l16-7-3 15-5-4-2 3-1-5 8-6-10 5z" fill="#fff" /></g>
            <g v-else-if="a === 'youtube'"><rect y="4" width="30" height="22" rx="5" fill="#f00" /><path d="M12 10l8 5-8 5z" fill="#fff" /></g>
            <g v-else-if="a === 'powerbi'"><rect width="30" height="30" fill="#1180d8" /><path d="M19 0h9v30h-9z" fill="#d49a12" /><path d="M11 7h9v23h-9z" fill="#e6b92a" /><path d="M2 15h9v15H2z" fill="#f2d35c" /></g>
            <g v-else-if="a === 'excel'"><path d="M6 1h23v28H6z" fill="#21a366" /><path d="M6 15h23v14H6z" fill="#185c37" /><path d="M17 8h12v14H17z" fill="#2ebd78" /><rect y="6" width="17" height="18" rx="1" fill="#107c41" /><text x="8" y="20" class="glyph">X</text></g>
            <g v-else-if="a === 'teams'"><circle cx="15" cy="6" r="5" fill="#7b83eb" /><path d="M8 11h21v10q-1 8-11 8-8 0-10-6z" fill="#7377d8" /><rect y="9" width="16" height="16" rx="1" fill="#4b53bc" /><text x="8" y="22" class="glyph">T</text><circle cx="24" cy="5" r="6" fill="#6bb700" stroke="#fff" /><path d="M21 5l2 2 4-4" fill="none" stroke="#fff" stroke-width="1.500" /></g>
            <g v-else-if="a === 'word'"><path d="M6 1h23v28H6z" fill="#41a5ee" /><path d="M6 10h23v10H6z" fill="#2b7cd3" /><path d="M6 20h23v9H6z" fill="#103f91" /><rect y="6" width="17" height="18" rx="1" fill="#185abd" /><text x="8" y="20" class="glyph">W</text></g>
            <g v-else><path d="M2 4l12-4 13 6 2 12-5 10-14 2L1 22z" fill="#3fdc8b" /><path d="M20 2l7 6 2 10-4 3z" fill="#f6ed4f" /><path d="M1 18l6-4v14z" fill="#21a6e8" /><rect x="5" y="5" width="20" height="20" fill="#000" /><text x="15" y="15" class="tiny bold">PC</text><path d="M8 22h7" stroke="#fff" /></g>
          </svg>
          <i v-if="running.includes(a) || a === 'chrome'" class="dot" />
        </button>
      </div>
      <div class="tray">
        <svg width="14" height="8" viewBox="0 0 14 8"><path d="M1 7l6-6 6 6" fill="none" stroke="#111" stroke-width="2" /></svg>
        <span class="lang">ITA</span>
        <span class="sys">
          <svg width="20" height="16" viewBox="0 0 20 16" fill="none" stroke="#111" stroke-width="1.500"><path d="M1 6a13 13 0 0 1 18 0M4 9a9 9 0 0 1 12 0M7 12a4 4 0 0 1 6 0" /><circle cx="10" cy="14" r="1" /></svg>
          <svg width="20" height="16" viewBox="0 0 20 16" fill="none" stroke="#111" stroke-width="1.500"><path d="M1 5h4l5-4v14l-5-4H1zM14 5l5 5M19 5l-5 5" /></svg>
          <svg width="20" height="16" viewBox="0 0 20 16"><rect x="2" y="4" width="15" height="10" rx="2" fill="none" stroke="#111" stroke-width="1.500" /><path d="M4 6h11v6H4zM18 7h2v4h-2z" fill="#111" /><path d="M5 0L1 6h3l-1 4 5-6H5l1-4z" fill="#111" stroke="#d6e0f7" /></svg>
        </span>
        <p class="clock">20:42<br />11/06/2023</p>
        <svg width="18" height="20" viewBox="0 0 18 20"><path d="M0 15c3-2 1-6 3-10 2-5 9-5 11 0 2 4 0 8 3 10zM6 17h6l-3 3z" fill="#111" /><path d="M5 7h4l-4 5h4M11 4h3l-3 4h3" fill="none" stroke="#d6e0f7" stroke-width="1.500" /></svg>
      </div>
    </footer>
  </div>
</template>

<style>
body { margin: 0; background: #f1f1f1; }
</style>

<style scoped>
.screen { min-height: 100vh; display: flex; flex-direction: column; background: #f1f1f1; color: #404040; font-family: "Noto Sans CJK SC", "Noto Sans", sans-serif; font-size: 14px; line-height: 20px; }
.screen * { box-sizing: border-box; }
button { font: inherit; color: inherit; border: 0; background: none; padding: 0; margin: 0; text-align: inherit; }
input { font: inherit; border: 0; background: none; outline: 0; padding: 0; min-width: 0; flex: 1; }
h1, h2, h3, p, ul { margin: 0; padding: 0; font-weight: 400; }
svg { flex: none; display: block; }
i { font-style: normal; }

.tabbar { height: 43px; background: #000; display: flex; align-items: center; padding-left: 12px; color: #fff; font: 14px/20px "Open Sans", sans-serif; }
.tab { width: 262px; height: 43px; display: flex; align-items: center; padding: 0 14px; position: relative; border-radius: 10px 10px 0 0; }
.tab.active { background: #353535; }
.tab.ruled::after { content: ""; position: absolute; right: 0; top: 10px; height: 24px; width: 1px; background: #555; }
.fav { width: 20px; height: 20px; }
.tab-title { flex: 1; margin-left: 10px; white-space: nowrap; mask-image: linear-gradient(90deg, #000 160px, transparent 190px); }
.tab-close { margin: 0 0 0 9px; }
.newtab { margin: 0 0 0 19px; }
.winctl { margin-left: auto; display: flex; }
.winctl button { width: 57px; display: grid; place-items: center; }
.winctl svg { fill: none; stroke: #fff; }

.addressbar { height: 46px; background: #353535; border-bottom: 1px solid #5a5a5a; display: flex; align-items: center; padding: 0 17px 0 18px; }
.nav { width: 40px; }
.nav svg { fill: none; stroke: #fff; stroke-width: 2; }
.nav.dim { opacity: .45; }
.omnibox { flex: 1; height: 36px; margin: 0 18px 0 -3px; border-radius: 18px; background: #202124; display: flex; align-items: center; padding: 0 12px 0 16px; }
.url { flex: 1; margin-left: 15px; white-space: nowrap; color: #9aa0a6; font: 17px/24px "Open Sans", sans-serif; }
.url b { font-weight: 400; color: #fff; }
.ic { fill: none; stroke: #c6c8ca; stroke-width: 1.5; margin-left: 19px; }
.ext { display: flex; align-items: center; gap: 20px; }
.me { width: 28px; height: 28px; margin: 0 -3px; border-radius: 50%; background: #f4511e; color: #fff; text-align: center; font: 14px/28px "Open Sans", sans-serif; }

.hub { height: 60px; background: #fff; border-bottom: 1px solid #d9d9d9; display: grid; grid-template-columns: 188px 600px 1fr auto; }
.brand { display: flex; align-items: center; padding: 0 20px 0 25px; justify-content: space-between; border-right: 1px solid #e2e2e2; }
.logo { overflow: visible; }
.logo-word { font: 700 34px "Lato", sans-serif; fill: #54565b; }
.modes { display: grid; grid-template-columns: repeat(3, 1fr); }
.mode { display: flex; align-items: center; justify-content: space-between; padding: 0 19px 2px 18px; border-right: 1px solid #e2e2e2; text-decoration: none; color: #404040; font-weight: 500; }
.mode.on { box-shadow: inset 0 -3px #00873d; }
.mode small { display: block; font-size: 14px; font-weight: 400; color: #808080; }
.drop { width: 30px; height: 30px; margin-top: 10px; border: 1px solid #ccc; border-radius: 3px; display: grid; place-items: center; }
.appname { padding-left: 108px; display: flex; align-items: center; gap: 14px; font-size: 16px; font-weight: 500; }
.tools { display: flex; align-items: center; gap: 21px; padding-right: 15px; }
.ask { width: 250px; height: 44px; border: 1px solid #ccc; border-radius: 4px; display: flex; align-items: center; gap: 13px; padding: 0 10px; }
.ask input::placeholder { color: #b3b3b3; opacity: 1; }
.bell { margin: 0 5px 0 1px; }
.launcher { margin: 0 9px 0 5px; }
.avatar { width: 40px; height: 40px; border-radius: 50%; background: #f39c12; color: #fff; text-align: center; font-size: 16px; line-height: 40px; }

.toolbar { height: 51px; border-bottom: 1px solid #d9d9d9; display: flex; align-items: center; }
.tb { height: 50px; display: flex; align-items: center; gap: 10px; font-weight: 500; white-space: nowrap; }
.note { width: 87px; padding-left: 11px; background: #fbfbfb; }
.advisor { width: 163px; height: 52px; margin: -1px 0; padding-left: 15px; background: #fbfbfb; border: 1px solid #655dc6; color: #655dc6; }
.selicons { display: flex; gap: 23px; padding: 0 14px 0 15px; }
.selicons svg { fill: none; stroke: #595959; stroke-width: 1.5; }
.off { opacity: .3; }
.chips { display: flex; gap: 5px; }
.chip { width: 180px; }
.chip-body { height: 36px; padding: 0 12px 0 5px; border-radius: 4px 4px 0 0; background: #00873d; color: #fff; display: flex; align-items: center; justify-content: space-between; font-size: 11px; line-height: 14px; }
.chip-body b { display: block; font-size: 12px; font-weight: 500; line-height: 15px; }
.strip { height: 4px; margin-top: 1px; background: #e2e2e2; }
.paese { background: linear-gradient(90deg, #00873d 3px, #e2e2e2 3px 142px, #bebebe 142px); }
.anno { background: linear-gradient(90deg, #00873d 25px, #e2e2e2 25px); }
.seltool { margin: 0 15px 0 auto; }
.sheettools { display: flex; align-items: center; background: #fbfbfb; border: solid #d9d9d9; border-width: 0 1px; padding-left: 13px; }
.sheettools .tb { gap: 13px; font-size: 13px; }
.sep { width: 1px; height: 30px; background: #d9d9d9; margin: 0 10px 0 12px; }
.sheettools .fogli { color: #595959; gap: 10px; font-size: 14px; }
.step { margin-left: 22px; }
.step + .step { margin: 0 21px 0 29px; }
.edit { background: #fbfbfb; padding: 0 23px 0 17px; gap: 10px; font-size: 13px; }

.sheet { flex: 1; display: flex; flex-direction: column; padding: 0 11px 10px; }
h1 { height: 61px; padding: 7px 0 0 8px; font-size: 26px; line-height: 34px; color: #aeaeae; }
.grid { flex: 1; display: grid; grid-template-columns: 150px minmax(0, 786fr) minmax(0, 943fr); grid-template-rows: 135px 334fr 262fr; gap: 9px; }
.card { background: #fff; border: 1px solid #d9d9d9; border-radius: 4px; overflow: hidden; display: flex; flex-direction: column; min-height: 0; }
.navbtns { display: grid; gap: 11px; padding: 1px; }
.navbtns button { border-radius: 10px; background: #008c99; color: #fff; font-size: 21px; font-weight: 700; display: flex; align-items: center; justify-content: center; gap: 10px; padding-left: 4px; }
.kpis { grid-column: 2 / 4; flex-direction: row; padding: 0 12px; }
.kpi { flex: 1; text-align: center; padding-top: 43px; font-family: "Liberation Sans", Arial, sans-serif; }
.kpi h3 { display: flex; align-items: center; justify-content: center; gap: 10px; padding-left: 10px; color: #000; font-size: 15px; font-weight: 700; line-height: 20px; }
.kpi p { margin-top: 15px; font-size: 30px; line-height: 36px; }
.olive { color: #7b7a12; }
.brown { color: #996515; }
.blue { color: #4477aa; }
.red { color: #cc3311; }

.filter h2 { padding: 20px 11px; font-size: 14px; font-weight: 500; }
.listwrap { flex: 1 1 0; min-height: 0; display: flex; overflow: hidden; margin-bottom: 1px; }
.filter ul { flex: 1; list-style: none; background: #e4e4e4; overflow: hidden; }
.filter li button { display: block; width: 100%; height: 36px; padding: 0 20px 1px 0; text-align: center; position: relative; white-space: nowrap; }
.filter li svg { position: absolute; right: 11px; top: 14px; }
.filter .picked { background: #009845; color: #fff; font-weight: 500; }
.filter .framed { background: #52b885; border: 5px solid #009845; }
.filter .framed svg { right: 6px; top: 9px; }
.track { width: 12px; background: #f1f1f1; }
.thumb { display: block; border-radius: 6px; background: #b8b8b8; }
.short { height: 39px; }
.long { height: 156px; }

.combo h2, .map h2 { font-size: 19px; line-height: 28px; font-weight: 500; padding: 12px 12px 0; }
.combo h2 { padding-bottom: 8px; }
.plot { width: 100%; flex: 1 1 0; min-height: 0; }
.axis { font-size: 13px; fill: #595959; }
.mid { text-anchor: middle; }
.start { text-anchor: start; }
.end { text-anchor: end; }
.light { fill: #fff; }
.dark { fill: #404040; }
.cat { font-size: 14px; fill: #737373; }

.map { grid-row: 2 / 4; grid-column: 3; }
.map h2 { padding: 14px 12px; font-size: 22px; }
.canvas { flex: 1 1 0; min-height: 0; position: relative; }
.canvas > svg { width: 100%; height: 100%; }
.place { font: 700 16px "Liberation Sans", Arial, sans-serif; fill: #b59aa9; text-anchor: middle; stroke: #fff; stroke-opacity: .7; stroke-width: 3; paint-order: stroke; stroke-linejoin: round; }
.credit { position: absolute; right: 9px; bottom: 8px; font-size: 15px; text-shadow: 1px 0 #fff, -1px 0 #fff, 0 1px #fff, 0 -1px #fff; }
.credit a { color: inherit; }
.foot { height: 34px; padding: 8px 0 0 1px; font-size: 15px; font-style: italic; color: #7f7f7f; }

.taskbar { height: 60px; background: #d6e0f7; border-top: 1px solid #b5bccb; display: grid; grid-template-columns: 1fr auto 1fr; font: 14px/20px "Open Sans", sans-serif; color: #111; }
.weather { display: flex; align-items: center; gap: 12px; padding: 0 0 2px 28px; }
.weather span { color: #555; font-size: 15px; }
.sun { width: 24px; height: 24px; border-radius: 50%; background: linear-gradient(160deg, #f2b72e, #f4650f); }
.dock { display: flex; align-items: center; }
.slot { width: 55px; height: 59px; display: grid; place-items: center; position: relative; }
.front::before { content: ""; position: absolute; inset: 5px 4px; border-radius: 5px; background: #ecf0fb; }
.front svg { position: relative; }
.dot { position: absolute; left: 24px; bottom: 5px; width: 7px; height: 4px; border-radius: 2px; background: #7c808b; }
.front .dot { left: 17px; width: 20px; background: #0078d4; }
.find { width: 273px; height: 39px; margin: 0 4px 0 5px; border: 1px solid #b9c3d9; border-radius: 20px; background: #f3f6fd; display: flex; align-items: center; padding: 0 2px 0 13px; gap: 12px; font-size: 16px; }
.find input::placeholder { color: #5a5f6a; opacity: 1; }
.bing { width: 66px; height: 33px; border-radius: 17px; background: linear-gradient(120deg, #35b4f5, #0068cf); display: grid; place-items: center; }
.tiny { font: 8px "Open Sans", sans-serif; fill: #fff; text-anchor: middle; }
.bold { font-weight: 700; font-size: 10px; }
.glyph { font: 700 13px "Open Sans", sans-serif; fill: #fff; text-anchor: middle; }
.tray { display: flex; align-items: center; justify-content: flex-end; padding-right: 26px; }
.lang { margin: 0 27px 0 31px; }
.sys { display: flex; gap: 9px; }
.clock { margin: 0 10px 2px 25px; text-align: right; }
</style>
